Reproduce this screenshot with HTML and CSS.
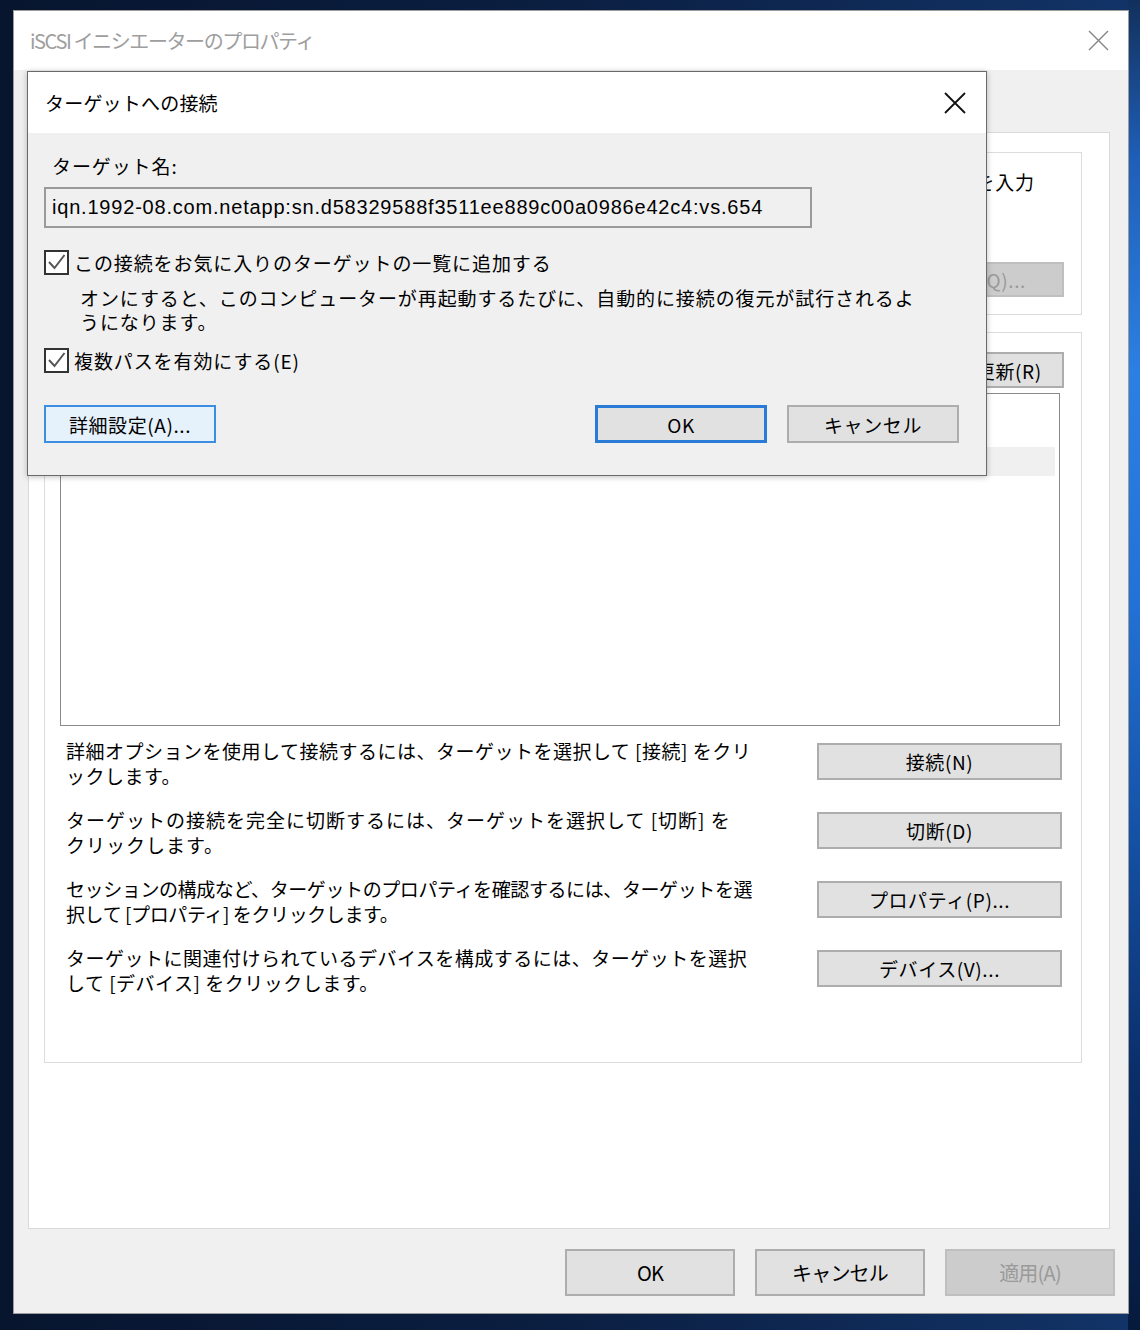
FILE: index.html
```html
<!DOCTYPE html>
<html lang="ja">
<head>
<meta charset="utf-8">
<title>iSCSI イニシエーターのプロパティ</title>
<link rel="stylesheet" href="styles.css">
</head>
<body>
<div class="desktop">
  <div class="window">
    <div class="titlebar">
      <span class="win-title">iSCSI イニシエーターのプロパティ</span>
      <svg class="win-close" width="21" height="21" viewBox="0 0 21 21"><path d="M1 1 L20 20 M20 1 L1 20" stroke="#858585" stroke-width="1.4" fill="none"/></svg>
    </div>
    <div class="win-body">
      <div class="tabpage">
        <div class="group g1">
          <div class="g1-line1"><span>ターゲットの IP アドレスまたは DNS 名を入力</span></div>
          <div class="g1-line2"></div>
          <div class="g1-row">
            <div class="field"></div>
            <button class="btn btn-disabled btn-quick">クイック接続(Q)...</button>
          </div>
        </div>
        <div class="group g2">
          <div class="g2-head">
            <button class="btn btn-refresh">最新の情報に更新(R)</button>
          </div>
          <div class="list">
            <div class="list-header"></div>
            <div class="list-row"></div>
          </div>
          <div class="actions">
            <div class="action">
              <p>詳細オプションを使用して接続するには、ターゲットを選択して [接続] をクリ<br>ックします。</p>
              <button class="btn btn-act">接続(N)</button>
            </div>
            <div class="action">
              <p class="wide">ターゲットの接続を完全に切断するには、ターゲットを選択して [切断] を<br>クリックします。</p>
              <button class="btn btn-act">切断(D)</button>
            </div>
            <div class="action">
              <p class="tight">セッションの構成など、ターゲットのプロパティを確認するには、ターゲットを選<br>択して [プロパティ] をクリックします。</p>
              <button class="btn btn-act">プロパティ(P)...</button>
            </div>
            <div class="action">
              <p>ターゲットに関連付けられているデバイスを構成するには、ターゲットを選択<br>して [デバイス] をクリックします。</p>
              <button class="btn btn-act">デバイス(V)...</button>
            </div>
          </div>
        </div>
      </div>
      <div class="footer">
        <button class="btn btn-foot">OK</button>
        <button class="btn btn-foot">キャンセル</button>
        <button class="btn btn-foot btn-disabled">適用(A)</button>
      </div>
    </div>
  </div>

  <div class="dialog">
    <div class="dlg-titlebar">
      <span class="dlg-title">ターゲットへの接続</span>
      <svg class="dlg-close" width="22" height="22" viewBox="0 0 22 22"><path d="M1 1 L21 21 M21 1 L1 21" stroke="#111" stroke-width="1.8" fill="none"/></svg>
    </div>
    <div class="dlg-body">
      <div class="dlg-label">ターゲット名:</div>
      <div class="dlg-input">iqn.1992-08.com.netapp:sn.d58329588f3511ee889c00a0986e42c4:vs.654</div>
      <div class="check-row row-fav">
        <span class="checkbox"><svg width="21" height="21" viewBox="0 0 21 21"><path d="M3 10 L8.5 16 L18.5 3" stroke="#555" stroke-width="2" fill="none"/></svg></span>
        <span class="check-label">この接続をお気に入りのターゲットの一覧に追加する</span>
      </div>
      <p class="dlg-desc">オンにすると、このコンピューターが再起動するたびに、自動的に接続の復元が試行されるよ<br>うになります。</p>
      <div class="check-row row-mpio">
        <span class="checkbox"><svg width="21" height="21" viewBox="0 0 21 21"><path d="M3 10 L8.5 16 L18.5 3" stroke="#555" stroke-width="2" fill="none"/></svg></span>
        <span class="check-label">複数パスを有効にする(E)</span>
      </div>
      <div class="dlg-buttons">
        <button class="btn btn-dlg btn-hover">詳細設定(A)...</button>
        <button class="btn btn-dlg btn-default">OK</button>
        <button class="btn btn-dlg">キャンセル</button>
      </div>
    </div>
  </div>
</div>
</body>
</html>
```

FILE: styles.css
```css
html, body {
  margin: 0;
  padding: 0;
}

body {
  width: 1140px;
  height: 1330px;
  overflow: hidden;
  font-family: "Noto Sans CJK JP", "Noto Sans", sans-serif;
  color: #000;
  background:
    linear-gradient(180deg, #12305c 0%, #1f5fb8 12%, #2c80e2 28%, #2372d6 45%, #1553a8 62%, #0b2f6c 80%, #061a3c 100%) right top / 12px 100% no-repeat,
    linear-gradient(90deg, #07152e 0%, #0b1f42 50%, #123468 100%);
}

.desktop {
  position: relative;
  width: 1140px;
  height: 1330px;
  box-sizing: border-box;
  padding: 10px 0 0 13px;
}

/* ---------- main window ---------- */
.window {
  width: 1116px;
  height: 1304px;
  box-sizing: border-box;
  border: 1px solid #9c9c9c;
  display: flex;
  flex-direction: column;
  background: #f0f0f0;
}

.titlebar {
  height: 59px;
  flex: none;
  background: #fff;
  display: flex;
  align-items: center;
  padding-left: 16px;
  padding-right: 19px;
}

.win-title {
  flex: 1;
  font-size: 20px;
  letter-spacing: -1.4px;
  color: #9e9e9e;
}

.win-close {
  display: block;
}

.win-body {
  flex: 1;
  display: flex;
  flex-direction: column;
  padding: 62px 0 0 14px;
}

.tabpage {
  height: 1097px;
  box-sizing: border-box;
  margin-right: 18px;
  background: #fff;
  border: 1px solid #d9d9d9;
  padding: 19px 27px 0 15px;
  display: flex;
  flex-direction: column;
}

.group {
  border: 1px solid #dcdcdc;
  box-sizing: border-box;
}

.g1 {
  height: 163px;
  padding: 17px 17px 0 21px;
}

.g2 {
  margin-top: 17px;
  height: 731px;
  padding: 19px 17px 0 15px;
}

.g1-line1,
.action p,
.dlg-label,
.check-label,
.dlg-desc {
  font-size: 19px;
  letter-spacing: 0.9px;
  white-space: nowrap;
}

.g1-line1 {
  display: flex;
  justify-content: flex-end;
  padding-right: 29px;
  line-height: 24px;
}

.g1-line2 {
  height: 24px;
}

.g1-row {
  margin-top: 44px;
  display: flex;
  align-items: center;
  gap: 10px;
}

.field {
  flex: 1;
  height: 33px;
  border: 1px solid #7a7a7a;
  margin-left: 150px;
  margin-right: 8px;
}

/* buttons */
.btn {
  font-family: "Noto Sans CJK JP", "Noto Sans", sans-serif;
  font-size: 19px;
  letter-spacing: 0.6px;
  color: #000;
  background: #e1e1e1;
  border: 2px solid #adadad;
  box-sizing: border-box;
  padding: 0;
  margin: 0;
  white-space: nowrap;
  display: flex;
  align-items: center;
  justify-content: center;
}

.btn-disabled {
  background: #cccccc;
  border-color: #bfbfbf;
  color: #9a9a9a;
}

.btn-quick {
  width: 240px;
  height: 35px;
}

.g2-head {
  display: flex;
  align-items: center;
  justify-content: flex-end;
  height: 36px;
}

.btn-refresh {
  width: 228px;
  height: 36px;
}

.list {
  margin-top: 5px;
  margin-right: 4px;
  height: 333px;
  box-sizing: border-box;
  border: 1px solid #8a8a8a;
  padding: 1px 4px 1px 1px;
  display: flex;
  flex-direction: column;
}

.list-header {
  height: 52px;
  background: #fff;
}

.list-row {
  height: 29px;
  background: #f0f0f0;
}

.actions {
  margin-top: 17px;
  padding-left: 6px;
  margin-right: 2px;
  display: flex;
  flex-direction: column;
  gap: 20px;
}

.action {
  height: 49px;
  display: flex;
  align-items: flex-start;
  justify-content: space-between;
}

.action p {
  margin: -4px 0 0 0;
  line-height: 24.5px;
  letter-spacing: 0.5px;
}

.action p.wide {
  letter-spacing: 1px;
}

.action p.tight {
  letter-spacing: -0.4px;
}

.btn-act {
  width: 245px;
  height: 37px;
  flex: none;
}

.footer {
  margin-top: 20px;
  padding-right: 13px;
  display: flex;
  justify-content: flex-end;
  gap: 20px;
}

.btn-foot {
  width: 170px;
  height: 47px;
  font-size: 20px;
  letter-spacing: -0.8px;
}

/* ---------- dialog ---------- */
.dialog {
  position: absolute;
  left: 27px;
  top: 71px;
  width: 960px;
  height: 405px;
  box-sizing: border-box;
  border: 1px solid #6a6a6a;
  box-shadow: 0 1px 6px rgba(0, 0, 0, 0.25);
  display: flex;
  flex-direction: column;
  background: #f0f0f0;
}

.dlg-titlebar {
  height: 61px;
  flex: none;
  background: #fff;
  display: flex;
  align-items: center;
  padding: 0 20px 0 17px;
}

.dlg-title {
  flex: 1;
  font-size: 19px;
  letter-spacing: 0.2px;
}

.dlg-close {
  display: block;
}

.dlg-body {
  flex: 1;
  padding: 21px 27px 0 16px;
  display: flex;
  flex-direction: column;
}

.dlg-label {
  margin-left: 8px;
  line-height: 24px;
}

.dlg-input {
  margin-top: 9px;
  width: 768px;
  height: 41px;
  box-sizing: border-box;
  border: 2px solid #9a9a9a;
  padding-left: 6px;
  line-height: 37px;
  font-family: "Liberation Sans", "Noto Sans", sans-serif;
  font-size: 20px;
  letter-spacing: 0.8px;
  white-space: nowrap;
  overflow: hidden;
}

.check-row {
  display: flex;
  align-items: center;
  gap: 5px;
  height: 25px;
}

.row-fav {
  margin-top: 22px;
}

.row-mpio {
  margin-top: 14px;
}

.checkbox {
  width: 25px;
  height: 25px;
  box-sizing: border-box;
  border: 2px solid #333;
  background: #fff;
  display: flex;
  align-items: center;
  justify-content: center;
  flex: none;
}

.checkbox svg {
  display: block;
}

.dlg-desc {
  margin: 11px 0 0 36px;
  line-height: 24px;
}

.dlg-buttons {
  margin-top: 32px;
  display: flex;
  gap: 20px;
}

.btn-dlg {
  width: 172px;
  height: 38px;
}

.btn-hover {
  background: #e5f1fb;
  border-color: #3c8fe0;
  margin-right: auto;
}

.btn-default {
  border-color: #2a7ad8;
  border-width: 3px;
}
```
